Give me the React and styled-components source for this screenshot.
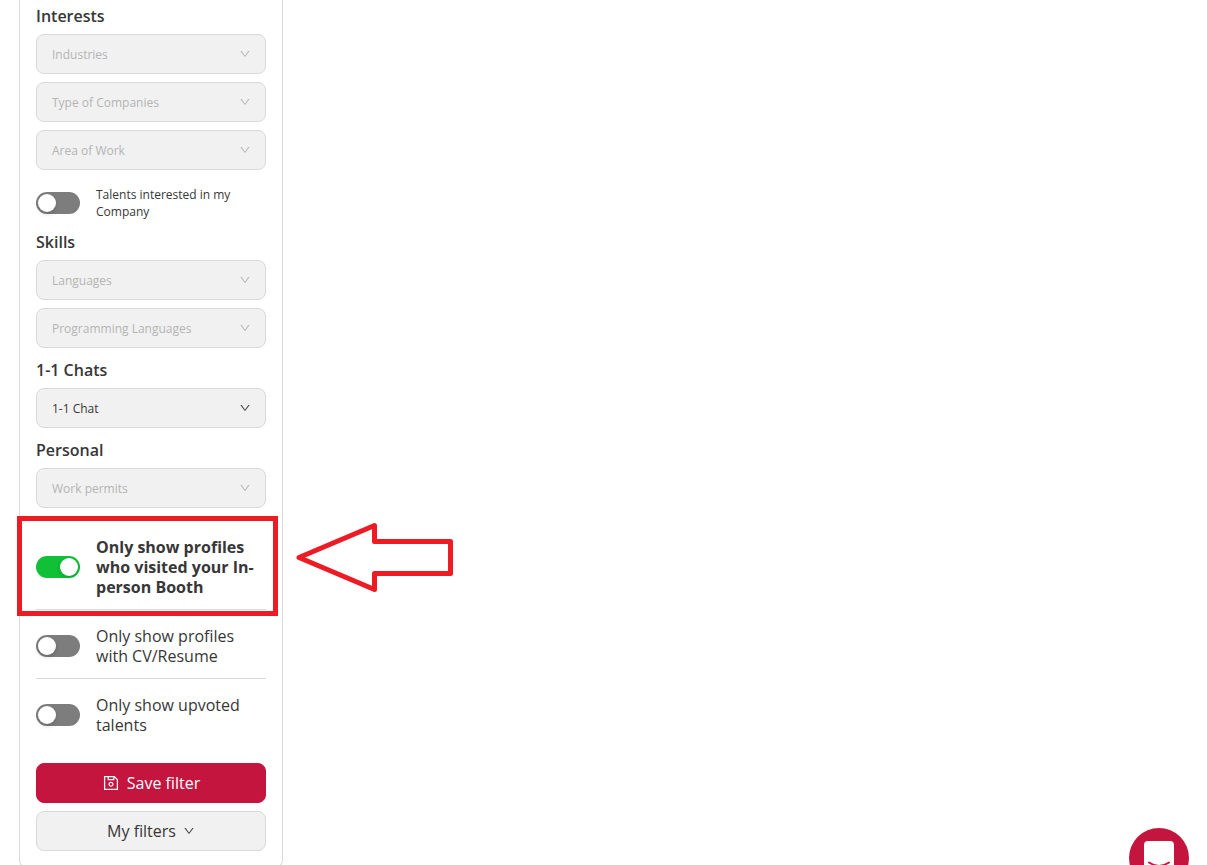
import { useState } from "react";
import styled, { createGlobalStyle } from "styled-components";
import { AiOutlineDown, AiOutlineSave } from "react-icons/ai";

const GlobalStyle = createGlobalStyle`
    * {
        box-sizing: border-box;
    }

    body {
        margin: 0;
        background: #fff;
        color: #373737;
        font-family: "Open Sans", "Noto Sans", sans-serif;
        font-size: 16px;
        line-height: 20px;
    }

    button,
    select {
        font-family: inherit;
    }
`;

const Page = styled.main`
    height: 100vh;
    padding-left: 19px;
    overflow: hidden;
`;

const FilterPanel = styled.form`
    width: 264px;
    padding: 6px 16px 16px;
    border: 1px solid #d9d9d9;
    border-top: 0;
    border-radius: 0 0 8px 8px;
`;

const Section = styled.section`
    display: flex;
    flex-direction: column;
    gap: 8px;
    margin-bottom: 12px;
`;

const SectionTitle = styled.h2`
    margin: 0;
    font-size: 16px;
    font-weight: 600;
    line-height: 20px;
`;

const SelectWrap = styled.div`
    position: relative;
    display: flex;
    color: ${({ $filled }) => ($filled ? "#373737" : "#b4b4b4")};

    svg {
        position: absolute;
        top: 14px;
        right: 15px;
        pointer-events: none;
    }
`;

const Select = styled.select`
    appearance: none;
    width: 100%;
    height: 40px;
    padding: 0 32px 0 15px;
    border: 1px solid #d9d9d9;
    border-radius: 8px;
    background: #f1f1f1;
    color: inherit;
    font-size: 12px;
`;

const ToggleRow = styled.div`
    position: relative;
    display: flex;
    align-items: center;
    gap: 16px;
    padding: 16px 0 12px;
    border-bottom: 1px solid #d9d9d9;

    &:last-child {
        border-bottom: 0;
    }
`;

const CompanyToggle = styled.div`
    display: flex;
    align-items: center;
    gap: 16px;
    padding-top: 8px;
`;

const Switch = styled.input`
    appearance: none;
    flex: none;
    width: 44px;
    height: 22px;
    margin: 0;
    padding: 2px;
    border-radius: 11px;
    background: #7d7d7d;
    cursor: pointer;

    &::before {
        content: "";
        display: block;
        width: 18px;
        height: 18px;
        border-radius: 50%;
        background: #fff;
        box-shadow: 0 2px 4px rgba(0, 35, 11, 0.2);
    }

    &:checked {
        background: #10c036;
    }

    &:checked::before {
        margin-left: auto;
    }
`;

const ToggleLabel = styled.label`
    font-size: ${({ $small }) => ($small ? "12px" : "16px")};
    line-height: ${({ $small }) => ($small ? "17px" : "20px")};
    font-weight: ${({ $bold }) => ($bold ? 700 : 400)};
`;

const ToggleList = styled.div`
    margin-top: 13px;
    margin-bottom: 16px;
`;

const Highlight = styled.div`
    position: absolute;
    top: -5px;
    right: -12px;
    bottom: -7px;
    left: -19px;
    border: 5px solid #ed1c24;
    pointer-events: none;
`;

const Arrow = styled.svg`
    position: absolute;
    top: 1px;
    left: 260px;
    pointer-events: none;
`;

const Actions = styled.div`
    display: flex;
    flex-direction: column;
    gap: 8px;
`;

const Button = styled.button`
    display: flex;
    align-items: center;
    justify-content: center;
    gap: 7px;
    height: 40px;
    border: 1px solid ${({ $primary }) => ($primary ? "#c4153f" : "#d9d9d9")};
    border-radius: 8px;
    background: ${({ $primary }) => ($primary ? "#c4153f" : "#f1f1f1")};
    color: ${({ $primary }) => ($primary ? "#fff" : "#373737")};
    font-size: 16px;
    font-weight: 400;
    cursor: pointer;
`;

const ChatLauncher = styled.button`
    position: fixed;
    right: 18px;
    bottom: -23px;
    display: flex;
    align-items: center;
    justify-content: center;
    width: 60px;
    height: 60px;
    padding: 0;
    border: 0;
    border-radius: 50%;
    background: #c4153f;
    cursor: pointer;
`;

const FilterSelect = ({ label, value }) => (
    <SelectWrap $filled={Boolean(value)}>
        <Select aria-label={label} defaultValue={value || ""}>
            <option value={value || ""}>{value || label}</option>
        </Select>
        <AiOutlineDown size={12} />
    </SelectWrap>
);

const Toggle = ({ id, label, small, bold, initial = false }) => {
    const [checked, setChecked] = useState(initial);

    return (
        <>
            <Switch
                id={id}
                type="checkbox"
                role="switch"
                checked={checked}
                onChange={(e) => setChecked(e.target.checked)}
            />
            <ToggleLabel htmlFor={id} $small={small} $bold={bold}>{label}</ToggleLabel>
        </>
    );
};

const App = () => (
    <Page>
        <GlobalStyle />
        <FilterPanel onSubmit={(e) => e.preventDefault()}>
            <Section>
                <SectionTitle>Interests</SectionTitle>
                <FilterSelect label="Industries" />
                <FilterSelect label="Type of Companies" />
                <FilterSelect label="Area of Work" />
                <CompanyToggle>
                    <Toggle id="interested" label="Talents interested in my Company" small />
                </CompanyToggle>
            </Section>
            <Section>
                <SectionTitle>Skills</SectionTitle>
                <FilterSelect label="Languages" />
                <FilterSelect label="Programming Languages" />
            </Section>
            <Section>
                <SectionTitle>1-1 Chats</SectionTitle>
                <FilterSelect label="1-1 Chats" value="1-1 Chat" />
            </Section>
            <Section>
                <SectionTitle>Personal</SectionTitle>
                <FilterSelect label="Work permits" />
            </Section>

            <ToggleList>
                <ToggleRow>
                    <Toggle
                        id="booth"
                        label="Only show profiles who visited your In-person Booth"
                        bold
                        initial
                    />
                    <Highlight />
                    <Arrow width="158" height="72" viewBox="0 0 158 72" aria-hidden="true">
                        <path
                            d="M78.5 3.5V19.5H154.5V51.5H78.5V67.5L3 35.5Z"
                            fill="none"
                            stroke="#ed1c24"
                            strokeWidth="5"
                            strokeLinejoin="round"
                        />
                    </Arrow>
                </ToggleRow>
                <ToggleRow>
                    <Toggle id="resume" label="Only show profiles with CV/Resume" />
                </ToggleRow>
                <ToggleRow>
                    <Toggle id="upvoted" label="Only show upvoted talents" />
                </ToggleRow>
            </ToggleList>

            <Actions>
                <Button type="submit" $primary>
                    <AiOutlineSave size={18} />
                    Save filter
                </Button>
                <Button type="button">
                    My filters
                    <AiOutlineDown size={12} />
                </Button>
            </Actions>
        </FilterPanel>

        <ChatLauncher type="button" aria-label="Open chat">
            <svg width="30" height="34" viewBox="0 0 30 34" aria-hidden="true">
                <path d="M4 0H26Q30 0 30 4V34L23 30H4Q0 30 0 26V4Q0 0 4 0Z" fill="#fff" />
                <path
                    d="M5 21.5Q15 28.5 25 21.5"
                    fill="none"
                    stroke="#c4153f"
                    strokeWidth="2"
                    strokeLinecap="round"
                />
            </svg>
        </ChatLauncher>
    </Page>
);

export default App;
